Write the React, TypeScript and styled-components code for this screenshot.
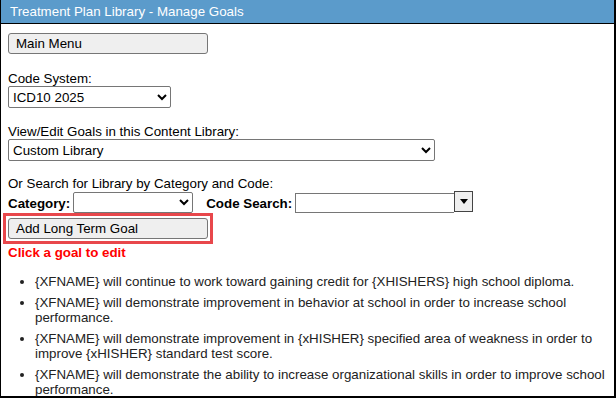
import React, { ReactElement } from 'react'
import styled, { createGlobalStyle } from 'styled-components'

const GlobalStyle = createGlobalStyle`
    html, body {
        margin: 0;
        padding: 0;
        background: #ffffff;
    }
    body {
        font-family: "Liberation Sans", Arial, sans-serif;
        font-size: 13.33px;
        color: #000;
    }
`

const Frame = styled.section`
    width: 616px;
    height: 398px;
    box-sizing: border-box;
    border-left: 1px solid #000;
    border-right: 2px solid #000;
    border-bottom: 2px solid #000;
    overflow: hidden;
    background: #fff;
`
const Header = styled.header`
    height: 23px;
    line-height: 23px;
    border-bottom: 1px solid #000;
    background: #5b9bcb;
    color: #fff;
    padding-left: 9px;
    font-size: 13.33px;
    white-space: nowrap;
`
const Body = styled.main`
    display: flex;
    flex-direction: column;
    align-items: flex-start;
    padding: 9px 4px 0 7px;
`
const ActionButton = styled.button`
    width: 200px;
    height: 21px;
    box-sizing: border-box;
    margin: 0;
    padding: 0 0 0 7px;
    text-align: left;
    font-family: "Liberation Sans", Arial, sans-serif;
    font-size: 13.33px;
    color: #000;
    background: #efefef;
    border: 1px solid #767676;
    border-radius: 3px;
    display: block;
`
const Label = styled.div<{ $gap: number }>`
    margin-top: ${p => p.$gap}px;
    line-height: 15px;
`
const Select = styled.select<{ $width: number }>`
    width: ${p => p.$width}px;
    height: 22px;
    box-sizing: border-box;
    margin: 0;
    font-family: "Liberation Sans", Arial, sans-serif;
    font-size: 13.33px;
    color: #000;
    background: #fff;
    border: 1px solid #767676;
    border-radius: 2px;
`
const SearchRow = styled.div`
    display: flex;
    align-items: flex-start;
    height: 22px;
`
const InlineLabel = styled.span<{ $left?: number }>`
    font-weight: 700;
    margin: 5px 3px 0 ${p => p.$left ?? 0}px;
    line-height: 15px;
`
const SmallSelect = styled(Select)`
    height: 21px;
    margin-top: 1px;
`
const ComboInput = styled.input`
    width: 159px;
    height: 20px;
    box-sizing: border-box;
    margin: 2px 0 0 0;
    padding: 0 3px;
    font-family: "Liberation Sans", Arial, sans-serif;
    font-size: 13.33px;
    border: 1px solid #767676;
    border-right: none;
`
const ComboButton = styled.button`
    width: 19px;
    height: 21px;
    box-sizing: border-box;
    margin: 0;
    padding: 0;
    display: flex;
    align-items: center;
    justify-content: center;
    background: #efefef;
    border: 1px solid #444;
`
// red square frame drawn around the "Add Long Term Goal" button
const Highlight = styled.div`
    margin: 0 0 0 -5px;
    padding: 2px;
    border: 3px solid #e8474b;
`
const Hint = styled.div`
    margin-top: 1px;
    line-height: 15px;
    font-weight: 700;
    color: #f00;
`
const GoalList = styled.ul`
    margin: 14px 0 0 0;
    padding-left: 27px;
    color: #222;
`
const GoalItem = styled.li`
    line-height: 15px;
    margin-bottom: 6px;
`

const goals = [
    '{XFNAME} will continue to work toward gaining credit for {XHISHERS} high school diploma.',
    '{XFNAME} will demonstrate improvement in behavior at school in order to increase school performance.',
    '{XFNAME} will demonstrate improvement in {xHISHER} specified area of weakness in order to improve {xHISHER} standard test score.',
    '{XFNAME} will demonstrate the ability to increase organizational skills in order to improve school performance.',
]

export default function App(): ReactElement {
    return (
        <>
            <GlobalStyle />
            <Frame>
                <Header>Treatment Plan Library - Manage Goals</Header>
                <Body>
                    <ActionButton>Main Menu</ActionButton>

                    <Label $gap={17}>Code System:</Label>
                    <Select $width={163} defaultValue="icd10">
                        <option value="icd10">ICD10 2025</option>
                    </Select>

                    <Label $gap={16}>View/Edit Goals in this Content Library:</Label>
                    <Select $width={427} defaultValue="custom">
                        <option value="custom">Custom Library</option>
                    </Select>

                    <Label $gap={15}>Or Search for Library by Category and Code:</Label>
                    <SearchRow>
                        <InlineLabel>Category:</InlineLabel>
                        <SmallSelect $width={120} defaultValue="">
                            <option value=""></option>
                        </SmallSelect>
                        <InlineLabel $left={13}>Code Search:</InlineLabel>
                        <ComboInput type="text" />
                        <ComboButton>
                            <svg width="8" height="5" viewBox="0 0 8 5">
                                <path d="M0 0 H8 L4 5 Z" fill="#000" />
                            </svg>
                        </ComboButton>
                    </SearchRow>

                    <Highlight>
                        <ActionButton>Add Long Term Goal</ActionButton>
                    </Highlight>
                    <Hint>Click a goal to edit</Hint>

                    <GoalList>
                        {goals.map(goal => (
                            <GoalItem key={goal}>{goal}</GoalItem>
                        ))}
                    </GoalList>
                </Body>
            </Frame>
        </>
    )
}
